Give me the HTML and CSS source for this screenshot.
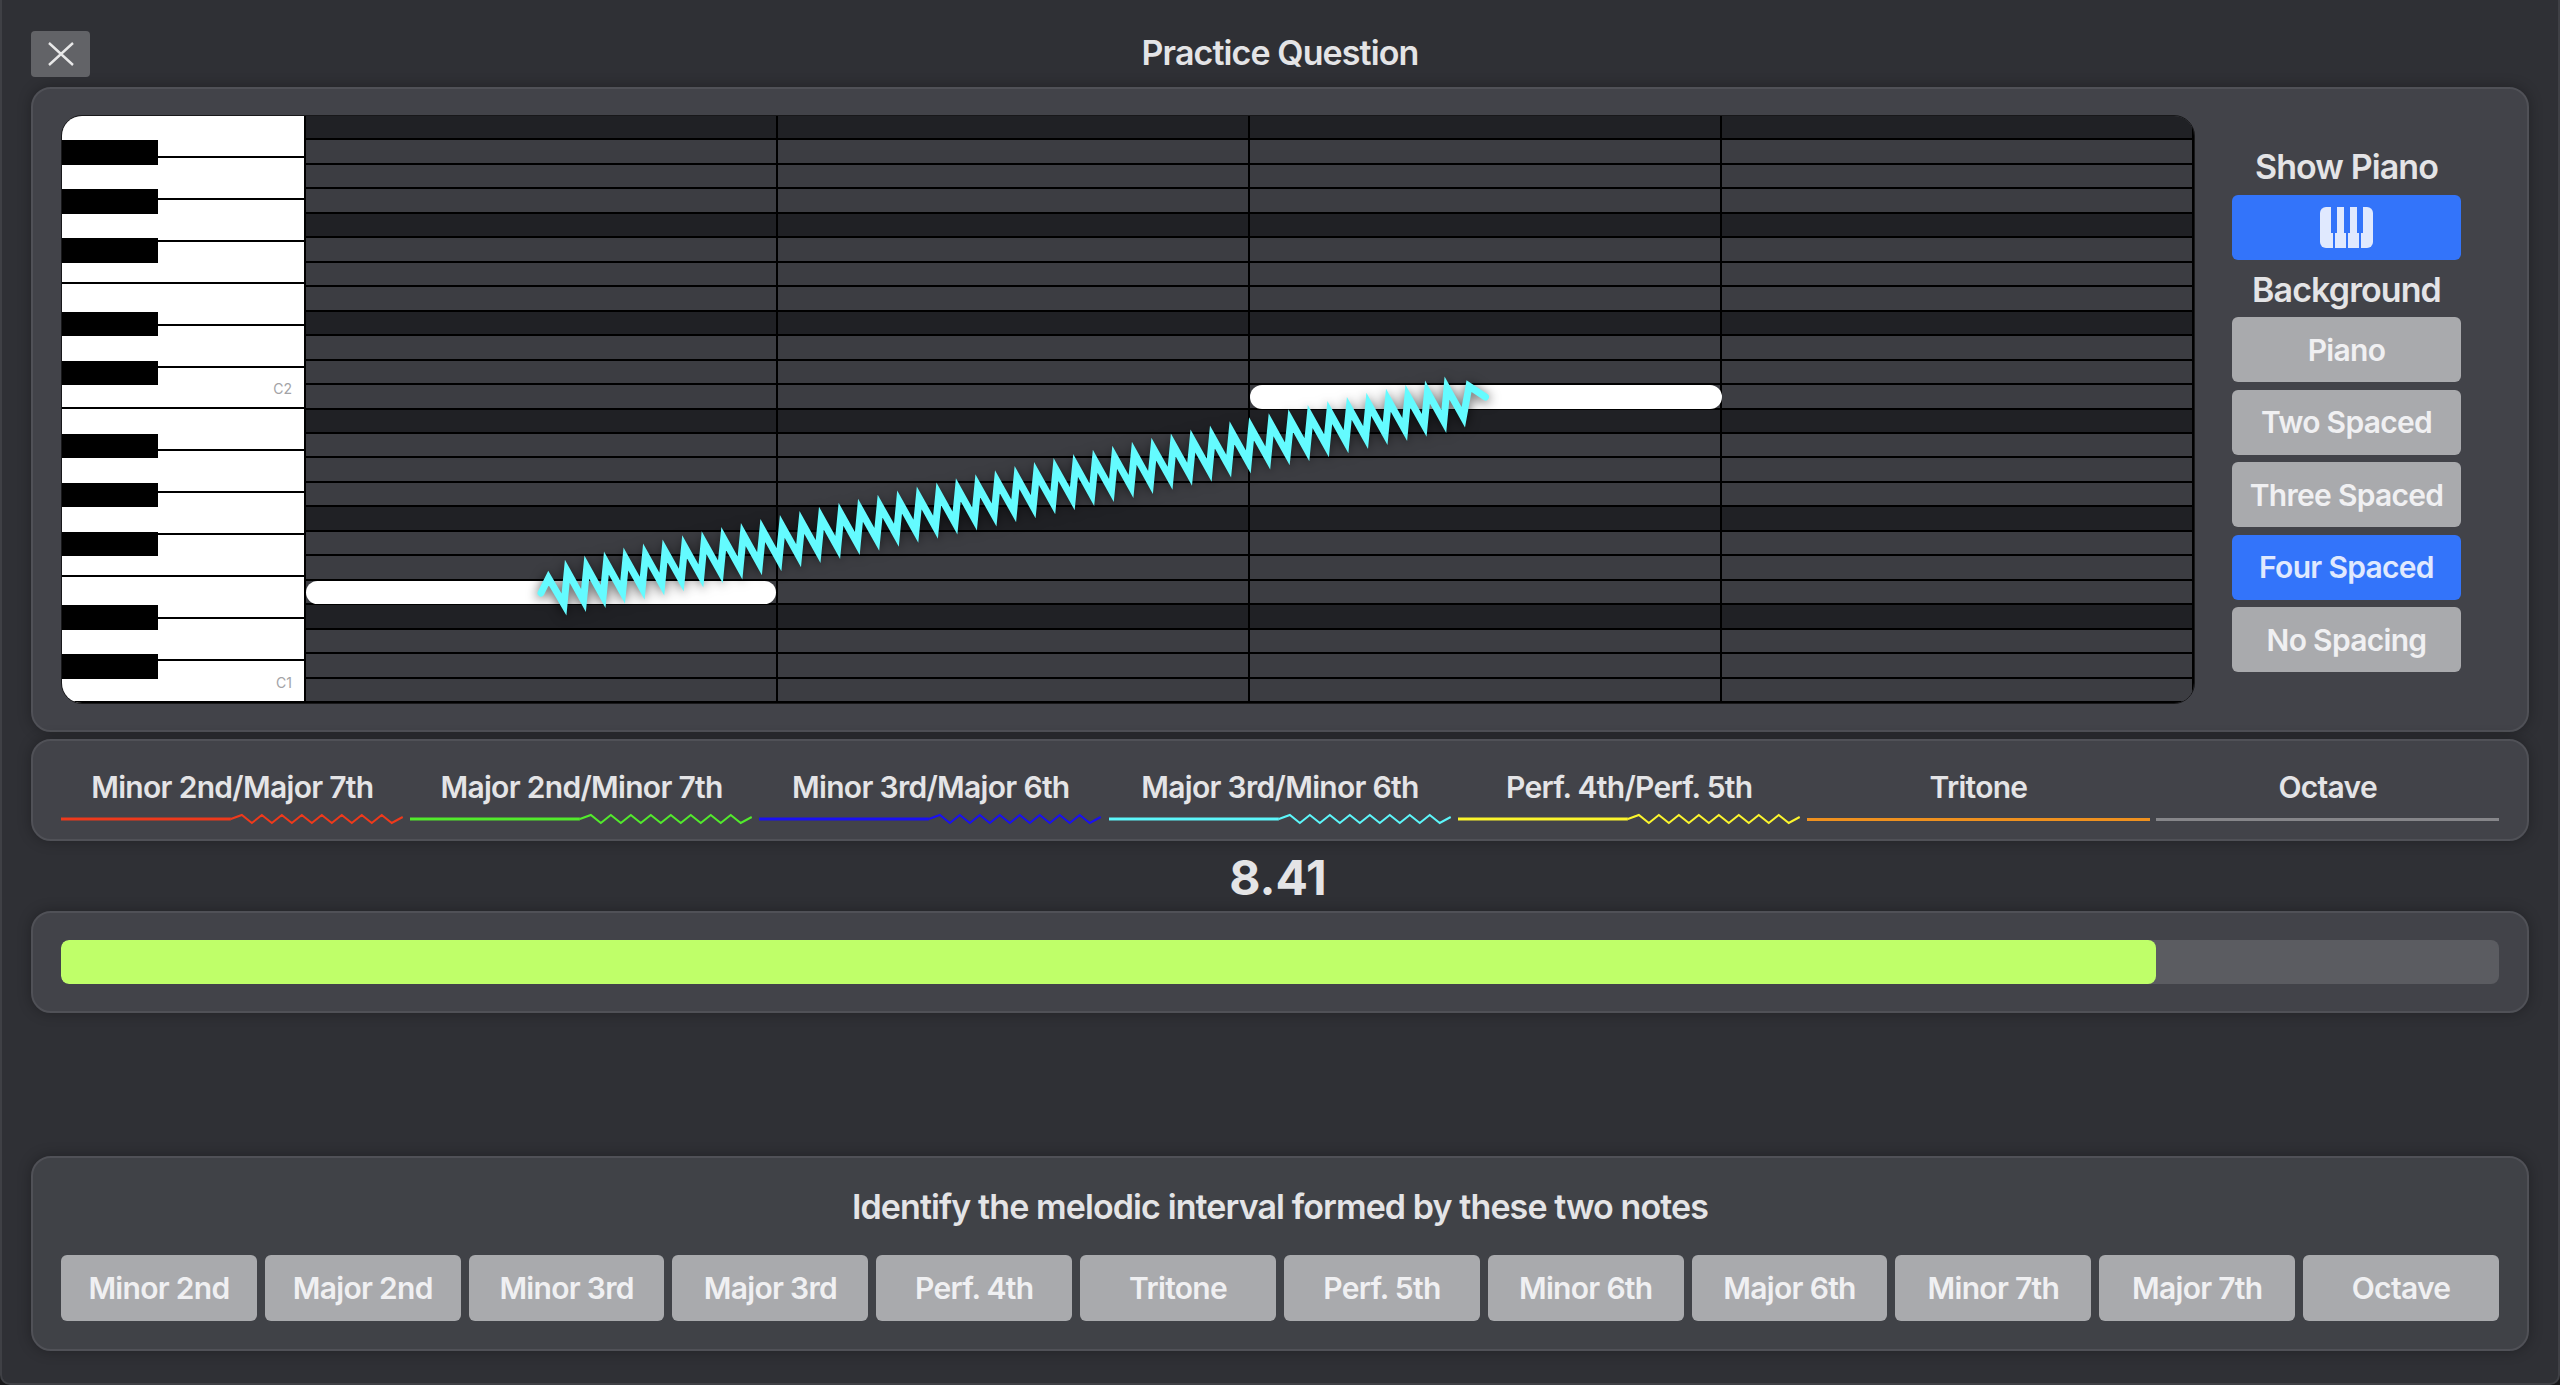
FILE: index.html
```html
<!DOCTYPE html>
<html lang="en">
<head>
    <meta charset="UTF-8">
    <meta name="viewport" content="width=device-width, initial-scale=1.0">
    <title>Practice Question</title>
    <link rel="stylesheet" href="styles.css">
</head>
<body>

<svg class="defs" width="0" height="0">
    <symbol id="legendWave" viewBox="0 0 343 24">
        <polyline class="wave-straight" points="0,12 170,12"></polyline>
        <polyline class="wave-zig" points="170,12 181,8 191,16 201,8 211,16 221,8 231,16 241,8 251,16 261,8 271,16 281,8 291,16 301,8 311,16 321,8 331,16 342,10"></polyline>
    </symbol>
</svg>

<div class="window">
    <!-- Header -->
    <header class="header">
        <button class="close-btn" aria-label="Close">
            <svg width="26" height="24" viewBox="0 0 26 24"><path d="M1 1 L25 23 M25 1 L1 23"></path></svg>
        </button>
        <h1 class="title">Practice Question</h1>
    </header>

    <!-- Piano roll -->
    <section class="panel panel-roll">
        <div class="board">
            <div class="piano">
                <div class="white-key"></div>
                <div class="white-key"></div>
                <div class="white-key"></div>
                <div class="white-key"></div>
                <div class="white-key"></div>
                <div class="white-key"></div>
                <div class="white-key"><span class="key-label">C2</span></div>
                <div class="white-key"></div>
                <div class="white-key"></div>
                <div class="white-key"></div>
                <div class="white-key"></div>
                <div class="white-key"></div>
                <div class="white-key"></div>
                <div class="white-key"><span class="key-label">C1</span></div>
                <div class="black-keys">
                    <div class="black-key k1"></div>
                    <div class="black-key k3"></div>
                    <div class="black-key k5"></div>
                    <div class="black-key k8"></div>
                    <div class="black-key k10"></div>
                    <div class="black-key k13"></div>
                    <div class="black-key k15"></div>
                    <div class="black-key k17"></div>
                    <div class="black-key k20"></div>
                    <div class="black-key k22"></div>
                </div>
            </div>
            <div class="roll">
                <div class="rows" id="rows"></div>
                <div class="bars">
                    <div class="bar"></div>
                    <div class="bar"></div>
                    <div class="bar"></div>
                    <div class="bar"></div>
                </div>
                <div class="notes">
                    <div class="note note-low"></div>
                    <div class="note note-high"></div>
                </div>
                <svg class="vibrato" viewBox="0 0 1888 587">
                    <polyline id="vibratoLine" points=""></polyline>
                </svg>
            </div>
        </div>

        <aside class="side">
            <div class="side-label">Show Piano</div>
            <button class="btn btn-side active">
                <svg class="piano-icon" width="53" height="41" viewBox="0 0 53 41">
                    <rect class="piano-icon-body" width="53" height="41" rx="6"></rect>
                    <path class="piano-icon-cut" d="M11 0H17V26H15V41H13V26H11Z M24 0H30V26H28V41H26V26H24Z M37 0H43V26H41V41H39V26H37Z"></path>
                </svg>
            </button>
            <div class="side-label">Background</div>
            <div class="side-buttons">
                <button class="btn btn-side">Piano</button>
                <button class="btn btn-side">Two Spaced</button>
                <button class="btn btn-side">Three Spaced</button>
                <button class="btn btn-side active">Four Spaced</button>
                <button class="btn btn-side">No Spacing</button>
            </div>
        </aside>
    </section>

    <!-- Legend -->
    <section class="panel panel-legend">
        <div class="legend-item c-red">
            <span>Minor 2nd/Major 7th</span>
            <svg class="legend-line"><use href="#legendWave"></use></svg>
        </div>
        <div class="legend-item c-green">
            <span>Major 2nd/Minor 7th</span>
            <svg class="legend-line"><use href="#legendWave"></use></svg>
        </div>
        <div class="legend-item c-blue">
            <span>Minor 3rd/Major 6th</span>
            <svg class="legend-line"><use href="#legendWave"></use></svg>
        </div>
        <div class="legend-item c-cyan">
            <span>Major 3rd/Minor 6th</span>
            <svg class="legend-line"><use href="#legendWave"></use></svg>
        </div>
        <div class="legend-item c-yellow">
            <span>Perf. 4th/Perf. 5th</span>
            <svg class="legend-line"><use href="#legendWave"></use></svg>
        </div>
        <div class="legend-item c-orange">
            <span>Tritone</span>
            <div class="legend-flat"></div>
        </div>
        <div class="legend-item c-gray">
            <span>Octave</span>
            <div class="legend-flat"></div>
        </div>
    </section>

    <!-- Score -->
    <div class="score">8.41</div>
    <section class="panel panel-progress">
        <div class="track">
            <div class="fill" style="width: 85.95%"></div>
        </div>
    </section>

    <!-- Answers -->
    <section class="panel panel-answers">
        <div class="prompt">Identify the melodic interval formed by these two notes</div>
        <div class="answers">
            <button class="btn">Minor 2nd</button>
            <button class="btn">Major 2nd</button>
            <button class="btn">Minor 3rd</button>
            <button class="btn">Major 3rd</button>
            <button class="btn">Perf. 4th</button>
            <button class="btn">Tritone</button>
            <button class="btn">Perf. 5th</button>
            <button class="btn">Minor 6th</button>
            <button class="btn">Major 6th</button>
            <button class="btn">Minor 7th</button>
            <button class="btn">Major 7th</button>
            <button class="btn">Octave</button>
        </div>
    </section>
</div>

<script src="script.js"></script>
</body>
</html>
```

FILE: styles.css
```css
* {
    box-sizing: border-box;
}

html, body {
    margin: 0;
    height: 100%;
    background-color: #18181a;
}

body {
    font-family: "Inter", "Liberation Sans", sans-serif;
    color: #e4e4e6;
    overflow: hidden;
}

.defs {
    position: absolute;
}

.window {
    height: 100vh;
    padding: 0 29px;
    background-color: #2f3035;
    border: 2px solid #3f4045;
    border-top: 0;
    border-radius: 0 0 10px 10px;
}

.header {
    height: 87px;
    display: flex;
    align-items: center;
    justify-content: center;
    position: relative;
    padding-top: 18px;
}

.close-btn {
    position: absolute;
    left: 0;
    top: 31px;
    width: 59px;
    height: 46px;
    padding: 0;
    border: none;
    border-radius: 4px;
    background-color: #626367;
    display: flex;
    align-items: center;
    justify-content: center;
}

.close-btn path {
    fill: none;
    stroke: #e8e8e8;
    stroke-width: 2.4;
}

.title {
    margin: 0;
    font-size: 34px;
    font-weight: 600;
    letter-spacing: -0.9px;
    line-height: 40px;
}

.panel {
    background-color: #424349;
    border: 2px solid #505157;
    border-radius: 20px;
    box-shadow: 0 0 14px rgba(0, 0, 0, 0.3);
}

.panel-roll {
    height: 645px;
    padding: 27px 66px 27px 29px;
    display: flex;
    gap: 38px;
}

.board {
    flex: 1;
    display: flex;
    border-radius: 20px;
    overflow: hidden;
    outline: 1px solid #18181a;
}

.piano {
    flex: 0 0 244px;
    position: relative;
    display: flex;
    flex-direction: column;
    background-color: #fff;
    border-right: 2px solid #000;
}

.white-key {
    flex: 1;
    display: flex;
    align-items: flex-end;
    justify-content: flex-end;
    border-bottom: 2px solid #000;
}

.key-label {
    font-size: 14px;
    line-height: 16px;
    color: #a3a3a6;
    padding: 0 12px 10px 0;
}

.black-keys {
    position: absolute;
    inset: 0;
    display: grid;
    grid-template-rows: repeat(24, 1fr);
}

.black-key {
    width: 96px;
    background-color: #000;
}

.k1 { grid-row: 2; }
.k3 { grid-row: 4; }
.k5 { grid-row: 6; }
.k8 { grid-row: 9; }
.k10 { grid-row: 11; }
.k13 { grid-row: 14; }
.k15 { grid-row: 16; }
.k17 { grid-row: 18; }
.k20 { grid-row: 21; }
.k22 { grid-row: 23; }

.roll {
    flex: 1;
    position: relative;
}

.rows {
    height: 100%;
    display: grid;
    grid-template-rows: repeat(24, 1fr);
}

.row {
    background-color: #3c3d42;
    border-bottom: 2px solid #000;
}

.row.dark {
    background-color: #202125;
}

.bars, .notes {
    position: absolute;
    inset: 0;
    display: grid;
    grid-template-columns: repeat(4, 1fr);
}

.bar {
    border-right: 2px solid #000;
}

.notes {
    grid-template-rows: repeat(24, 1fr);
}

.note {
    margin: 0 2px 1px 0;
    background-color: #fff;
    border-radius: 12px;
}

.note-low {
    grid-row: 20;
    grid-column: 1;
}

.note-high {
    margin-right: 0;
    grid-row: 12;
    grid-column: 3;
}

.vibrato {
    position: absolute;
    inset: 0;
    width: 100%;
    height: 100%;
    overflow: visible;
    filter: drop-shadow(0 2px 6px rgba(0, 0, 0, 0.7));
}

.vibrato polyline {
    fill: none;
    stroke: #64fbff;
    stroke-width: 7;
    stroke-linecap: round;
    stroke-linejoin: miter;
    stroke-miterlimit: 12;
}

.side {
    width: 229px;
    padding-top: 21px;
}

.side-label {
    height: 58px;
    font-size: 34px;
    font-weight: 600;
    letter-spacing: -0.9px;
    line-height: 60px;
    text-align: center;
    white-space: nowrap;
}

.side-buttons {
    margin-top: -1px;
    display: flex;
    flex-direction: column;
    gap: 7.5px;
}

.btn {
    height: 66px;
    padding: 0;
    border: none;
    border-radius: 6px;
    background-color: #a9aaad;
    color: #f0f0f2;
    font-family: inherit;
    font-size: 30px;
    font-weight: 600;
    letter-spacing: -0.7px;
    white-space: nowrap;
}

.btn-side {
    width: 100%;
    height: 65px;
    display: flex;
    align-items: center;
    justify-content: center;
}

.btn.active {
    background-color: #3374fa;
    color: #e0e9fe;
}

.piano-icon-body {
    fill: #e0e9fe;
}

.piano-icon-cut {
    fill: #3374fa;
}

.panel-legend {
    height: 102px;
    margin-top: 7px;
    padding: 26px 28px 0;
    display: flex;
    gap: 6.5px;
}

.legend-item {
    flex: 1;
    min-width: 0;
    display: flex;
    flex-direction: column;
    text-align: center;
    font-size: 30px;
    font-weight: 600;
    letter-spacing: -0.7px;
    line-height: 40px;
    white-space: nowrap;
}

.legend-line {
    display: block;
    width: 100%;
    height: 24px;
    overflow: visible;
}

.legend-flat {
    height: 3px;
    margin-top: 11px;
    background-color: currentColor;
}

.wave-straight, .wave-zig {
    fill: none;
    stroke: currentColor;
}

.wave-straight {
    stroke-width: 3;
}

.wave-zig {
    stroke-width: 2;
}

.legend-item span {
    color: #e4e4e6;
}

.c-red { color: #ee3a1c; }
.c-green { color: #52ea2c; }
.c-blue { color: #1a10f2; }
.c-cyan { color: #5cf6fa; }
.c-yellow { color: #fbf52d; }
.c-orange { color: #ef911f; }
.c-gray { color: #86868a; }

.score {
    height: 70px;
    padding-right: 4px;
    font-size: 48px;
    font-weight: 700;
    line-height: 74px;
    text-align: center;
}

.panel-progress {
    height: 102px;
    padding: 27px 28px;
}

.track {
    height: 44px;
    background-color: #5b5c61;
    border-radius: 8px;
    overflow: hidden;
}

.fill {
    height: 100%;
    background-color: #bfff69;
    border-radius: 8px;
}

.panel-answers {
    height: 195px;
    margin-top: 143px;
    padding: 0 28px;
    background-color: #404247;
}

.prompt {
    height: 97px;
    padding-top: 27px;
    font-size: 34px;
    font-weight: 600;
    letter-spacing: -0.9px;
    line-height: 44px;
    text-align: center;
}

.answers {
    display: grid;
    grid-template-columns: repeat(12, 1fr);
    gap: 8px;
}
```

FILE: script.js
```js
// grid rows, every fourth one is dark
const rows = document.getElementById('rows');
for (let i = 0; i < 24; i++) {
    const row = document.createElement('div');
    row.className = i % 4 === 0 ? 'row dark' : 'row';
    rows.appendChild(row);
}

// vibrato line between the two notes, coordinates are relative to the roll
const originX = 306;
const originY = 116;
const points = [[541, 593], [548.5, 578]];
for (let k = 0; k <= 46; k++) {
    points.push([564 + 19.55 * k, 604.5 - 4.07 * k]);
    if (k < 46) {
        points.push([567.3 + 19.55 * k, 571.2 - 4.07 * k]);
    }
}
points.push([1469, 386], [1485.5, 397]);

document.getElementById('vibratoLine').setAttribute(
    'points',
    points.map(p => `${(p[0] - originX).toFixed(1)},${(p[1] - originY).toFixed(1)}`).join(' ')
);
```
